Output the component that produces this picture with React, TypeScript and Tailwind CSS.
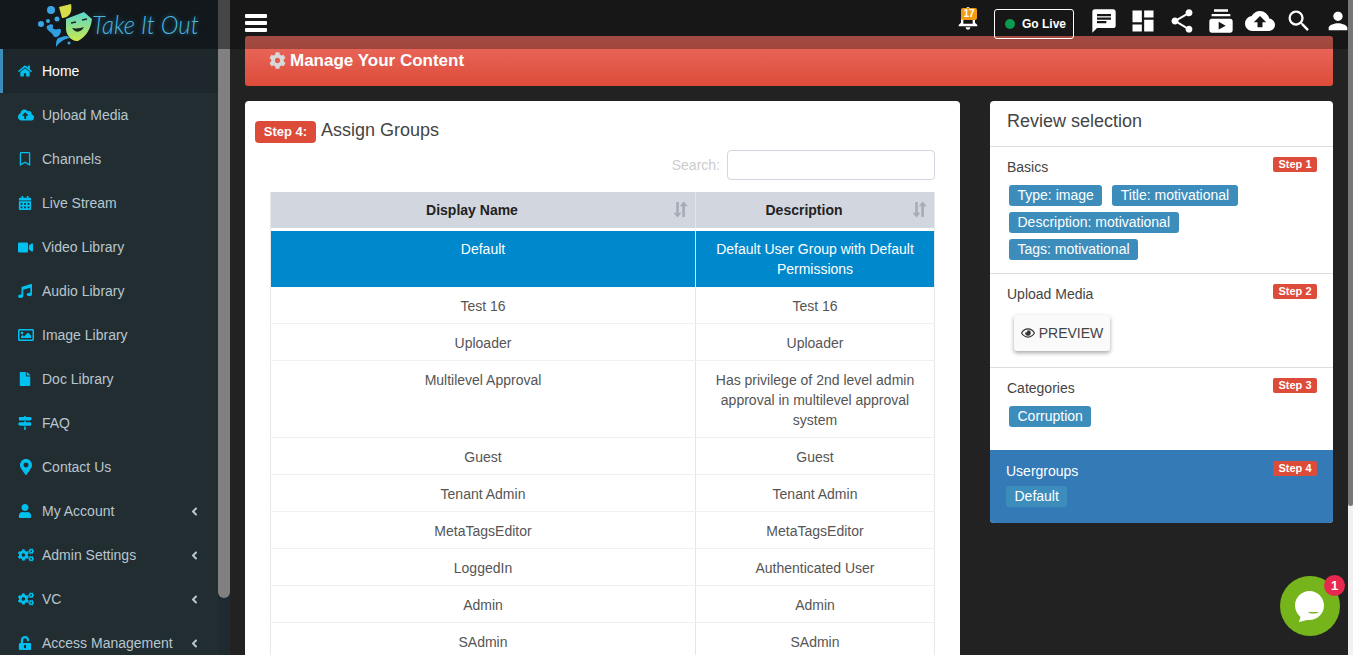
import type { ReactNode } from 'react'
import {
  FaAngleLeft,
  FaCalendarAlt,
  FaCloudUploadAlt,
  FaCog,
  FaCogs,
  FaFile,
  FaHome,
  FaMapMarkerAlt,
  FaMapSigns,
  FaMusic,
  FaRegBookmark,
  FaRegEye,
  FaRegImage,
  FaUnlockAlt,
  FaUser,
  FaVideo,
} from 'react-icons/fa'
import {
  MdChat,
  MdCloudUpload,
  MdDashboard,
  MdNotificationsNone,
  MdPerson,
  MdSearch,
  MdShare,
  MdSubscriptions,
} from 'react-icons/md'

const menu = [
  { label: 'Home', icon: <FaHome />, active: true },
  { label: 'Upload Media', icon: <FaCloudUploadAlt className="text-[16px]" /> },
  { label: 'Channels', icon: <FaRegBookmark /> },
  { label: 'Live Stream', icon: <FaCalendarAlt /> },
  { label: 'Video Library', icon: <FaVideo className="text-[15px]" /> },
  { label: 'Audio Library', icon: <FaMusic /> },
  { label: 'Image Library', icon: <FaRegImage className="text-[16px]" /> },
  { label: 'Doc Library', icon: <FaFile /> },
  { label: 'FAQ', icon: <FaMapSigns /> },
  { label: 'Contact Us', icon: <FaMapMarkerAlt className="text-[16px]" /> },
  { label: 'My Account', icon: <FaUser />, more: true },
  { label: 'Admin Settings', icon: <FaCogs className="text-[16px]" />, more: true },
  { label: 'VC', icon: <FaCogs className="text-[16px]" />, more: true },
  { label: 'Access Management', icon: <FaUnlockAlt />, more: true },
]

const groups = [
  ['Test 16', 'Test 16'],
  ['Uploader', 'Uploader'],
  ['Multilevel Approval', 'Has privilege of 2nd level admin approval in multilevel approval system'],
  ['Guest', 'Guest'],
  ['Tenant Admin', 'Tenant Admin'],
  ['MetaTagsEditor', 'MetaTagsEditor'],
  ['LoggedIn', 'Authenticated User'],
  ['Admin', 'Admin'],
  ['SAdmin', 'SAdmin'],
]

function Logo() {
  return (
    <div className="flex h-full items-center pl-[38px]">
      <svg width="56" height="49" viewBox="0 0 56 49" className="shrink-0">
        <path d="M20 38c5-1 8-4 12 0-7 1-11 5-14 9 0-4 0-7 2-9z" fill="#2f9fe0" />
        <path d="M9 26c4-3 7-2 6 1-1 2 3 3 5 2 3-1 4 2 2 5-2 4-6 4-7 1-1-3-8-5-6-9z" fill="#2f9fe0" />
        <circle cx="13" cy="10" r="4" fill="#3aa6e6" />
        <circle cx="3" cy="24" r="3" fill="#3aa6e6" />
        <circle cx="10" cy="21" r="2" fill="#3aa6e6" />
        <circle cx="19" cy="19" r="2.500" fill="#3aa6e6" />
        <circle cx="31" cy="43" r="1.500" fill="#3aa6e6" />
        <path d="M21 7l12-3c1 5 0 10-3 12-3 2-6 2-6 2z" fill="#d6dc4a" />
        <path d="M28 19l18-7 8 7c-1 9-5 17-14 22-7 1-12-7-12-12z" fill="url(#mask)" />
        <path d="M34 28c3 5 9 5 12-1-3 1-8 2-12 1z" fill="#1a2a20" />
        <path d="M33 23l5-1M44 20l5-1" stroke="#1a2a20" strokeWidth="1.600" />
        <defs>
          <linearGradient id="mask" x1="0" y1="0" x2="0" y2="1">
            <stop offset="0" stopColor="#59d6cf" />
            <stop offset="1" stopColor="#c9ea4c" />
          </linearGradient>
        </defs>
      </svg>
      <span className="ml-[-2px] origin-left scale-x-[0.92] font-['Lato',sans-serif] text-[26px] font-light italic whitespace-nowrap text-[#4fb3de] [text-shadow:0_0_6px_#1d6f95]">
        Take It Out
      </span>
    </div>
  )
}

function Sidebar() {
  return (
    <aside className="flex w-[230px] shrink-0 bg-[#222d32] text-[14px]">
      <div className="w-[218px] pt-[49px]">
        {menu.map((item) => (
          <div
            key={item.label}
            className={`flex h-[44px] items-center border-l-[3px] pr-[17px] pl-[15px] ${
              item.active ? 'border-[#3c8dbc] bg-[#1e282c] text-white' : 'border-transparent text-[#b8c7ce]'
            }`}
          >
            <span className="flex w-[24px] shrink-0 items-center text-[14px] text-[#00c0ef]">{item.icon}</span>
            <span className="whitespace-nowrap">{item.label}</span>
            {item.more && <FaAngleLeft className="ml-auto shrink-0 text-[13px]" />}
          </div>
        ))}
      </div>
      <div className="h-[655px] w-[12px] rounded-b-[6px] bg-[#1e2a30]">
        <div className="h-[598px] rounded-b-[6px] bg-[#808080]" />
      </div>
    </aside>
  )
}

function TopBar() {
  const icons = [
    <MdChat />,
    <MdDashboard />,
    <MdShare />,
    <MdSubscriptions />,
    <MdCloudUpload className="text-[30px]" />,
    <MdSearch />,
    <MdPerson />,
  ]
  return (
    <header className="absolute inset-x-0 top-0 z-10 flex h-[49px]">
      <div className="w-[230px] shrink-0 bg-black/45">
        <Logo />
      </div>
      <div className="flex flex-1 items-start bg-black/30 pl-[15px] text-white">
        <div className="mt-[14px] flex w-[22px] flex-col gap-[3px]">
          <span className="h-[4px] rounded-[1px] bg-white" />
          <span className="h-[4px] rounded-[1px] bg-white" />
          <span className="h-[4px] rounded-[1px] bg-white" />
        </div>
        <div className="relative mt-[4px] ml-auto text-[28px]">
          <MdNotificationsNone />
          <span className="absolute top-[4px] left-[7px] w-[16px] rounded-[2px] bg-[#f39c12] text-center text-[10px] leading-[12px] font-bold">
            17
          </span>
        </div>
        <div className="mt-[9px] ml-[12px] flex h-[30px] w-[80px] shrink-0 items-center rounded-[3px] border border-white pl-[10px] text-[12px] font-bold">
          <span className="mr-[7px] h-[10px] w-[10px] rounded-full bg-[#0a9b50]" />
          Go Live
        </div>
        <div className="mt-[7px] mr-[-4px] ml-[10px] flex w-[273px] shrink-0 items-center text-[28px]">
          {icons.map((icon, i) => (
            <span key={i} className="flex h-[28px] w-[39px] shrink-0 items-center justify-center">
              {icon}
            </span>
          ))}
        </div>
      </div>
    </header>
  )
}

function SortIcon() {
  return (
    <svg width="15" height="17" viewBox="0 0 14 16" className="absolute top-[9px] right-[7px]" fill="#a6abb4">
      <path d="M3 1h2.400v10H8l-3.800 4.500L.5 11H3z" />
      <path d="M8.700 15V5H6.300L10 .5 13.700 5h-2.600v10z" />
    </svg>
  )
}

function GroupTable() {
  const cell = 'border-b border-[#f0f0f0] px-[8px] pt-[9px] pb-[7px] align-top leading-[20px]'
  return (
    <table className="ml-[25px] w-[665px] table-fixed border-x border-[#e6e8ec] text-center text-[14px] text-[#555]">
      <colgroup>
        <col className="w-[425px]" />
        <col />
      </colgroup>
      <thead>
        <tr className="h-[36px] bg-[#d2d6de] text-[14px] font-bold text-[#222]">
          <th className="relative pr-[22px] font-bold">
            Display Name
            <SortIcon />
          </th>
          <th className="relative border-l border-[#e2e5ea] pr-[22px] font-bold">
            Description
            <SortIcon />
          </th>
        </tr>
      </thead>
      <tbody>
        <tr className="h-[3px]">
          <td colSpan={2} />
        </tr>
        <tr className="bg-[#0088cc] text-white">
          <td className="px-[8px] pt-[8px] pb-[8px] align-top leading-[20px]">Default</td>
          <td className="border-l border-[#e2e5ea] px-[18px] pt-[8px] pb-[8px] align-top leading-[20px]">
            Default User Group with Default Permissions
          </td>
        </tr>
        {groups.map(([name, description]) => (
          <tr key={name}>
            <td className={cell}>{name}</td>
            <td className={`${cell} border-l border-l-[#e2e5ea]`}>
              <div className="mx-auto w-[215px]">{description}</div>
            </td>
          </tr>
        ))}
      </tbody>
    </table>
  )
}

function Pill({ children }: { children: ReactNode }) {
  return (
    <span className="inline-block h-[21px] rounded-[3px] bg-[#3c8dbc] px-[8.5px] text-[14px] leading-[21px] whitespace-nowrap text-white">
      {children}
    </span>
  )
}

function StepTag({ n, top = 'top-[10px]' }: { n: number; top?: string }) {
  return (
    <span className={`absolute ${top} right-[16px] h-[15px] w-[44px] rounded-[2px] bg-[#dd4b39] text-center text-[11px] leading-[15px] font-bold whitespace-nowrap text-white`}>
      Step {n}
    </span>
  )
}

function ReviewCard() {
  return (
    <div className="w-[343px] shrink-0 self-start overflow-hidden rounded-[4px] bg-white text-[14px] text-[#444]">
      <div className="h-[46px] border-b border-[#ddd] pt-[8px] pl-[17px] text-[18px] leading-[24px]">Review selection</div>
      <div className="relative h-[127px] border-b border-[#ddd] pt-[10px] pl-[17px]">
        <StepTag n={1} />
        <div className="leading-[20px]">Basics</div>
        <div className="mt-[8px] ml-[2px] flex w-[260px] flex-wrap gap-x-[10px] gap-y-[6px]">
          <Pill>Type: image</Pill>
          <Pill>Title: motivational</Pill>
          <Pill>Description: motivational</Pill>
          <Pill>Tags: motivational</Pill>
        </div>
      </div>
      <div className="relative h-[94px] border-b border-[#ddd] pt-[10px] pl-[17px]">
        <StepTag n={2} />
        <div className="leading-[20px]">Upload Media</div>
        <div className="mt-[11px] ml-[7px] flex h-[36px] w-[96px] items-center justify-center gap-[4px] rounded-[3px] bg-[#fafafa] shadow-[0_2px_4px_rgba(0,0,0,.35)]">
          <FaRegEye className="text-[14px] text-[#333]" />
          PREVIEW
        </div>
      </div>
      <div className="relative h-[82px] pt-[10px] pl-[17px]">
        <StepTag n={3} />
        <div className="leading-[20px]">Categories</div>
        <div className="mt-[8px] ml-[2px]">
          <Pill>Corruption</Pill>
        </div>
      </div>
      <div className="relative h-[73px] bg-[#337ab7] pt-[11px] pl-[16px] text-white">
        <StepTag n={4} top="top-[11px]" />
        <div className="leading-[20px]">Usergroups</div>
        <div className="mt-[5px]">
          <Pill>Default</Pill>
        </div>
      </div>
    </div>
  )
}

function ChatBubble() {
  return (
    <div className="absolute top-[576px] left-[1280px] z-20 flex h-[60px] w-[60px] items-center justify-center rounded-full bg-[#76b41c]">
      <svg width="32" height="34" viewBox="0 0 32 34">
        <path d="M15.500 2c8 0 14.500 6.500 14.500 14.500S23.500 31 15.500 31c-1.500 0-3 0-4.500.5L5 33l1.500-5C3 25 1 21 1 16.500 1 8.500 7.500 2 15.500 2z" fill="#fff" />
        <path d="M14 23c2 2 8 2 11 0z" fill="#76b41c" />
      </svg>
      <span className="absolute -top-[1px] -right-[5px] flex h-[21px] w-[21px] items-center justify-center rounded-full bg-[#e8294f] text-[13px] font-bold text-white">
        1
      </span>
    </div>
  )
}

export default function App() {
  return (
    <div className="relative flex h-[655px] w-[1353px] overflow-hidden bg-[#222] font-['Liberation_Sans',Arial,sans-serif]">
      <TopBar />
      <Sidebar />
      <main className="min-w-0 flex-1 pt-[36px] pl-[15px]">
        <div className="flex h-[50px] w-[1088px] items-center rounded-[3px] bg-gradient-to-b from-[#ea6c60] to-[#dd4b39] pb-[1px] pl-[24px] text-[17px] font-bold text-white">
          <FaCog className="mr-[4px] text-[17px] text-[#d8d8d8]" />
          Manage Your Content
        </div>
        <div className="mt-[15px] flex gap-[30px]">
          <div className="h-[600px] w-[715px] shrink-0 rounded-[4px] bg-white">
            <div className="flex h-[42px] items-start pt-[20px] pl-[10px]">
              <span className="flex h-[22px] w-[61px] items-center justify-center rounded-[4px] bg-[#dd4b39] text-[13px] font-bold text-white">
                Step 4:
              </span>
              <span className="ml-[5px] text-[18px] leading-[18px] text-[#444]">Assign Groups</span>
            </div>
            <div className="mt-[7px] flex items-center justify-end pr-[25px] text-[14px] text-[#ccc]">
              Search:
              <input className="ml-[7px] h-[30px] w-[208px] rounded-[4px] border border-[#d2d6de] bg-white" />
            </div>
            <div className="mt-[12px]">
              <GroupTable />
            </div>
          </div>
          <ReviewCard />
        </div>
      </main>
      <div className="absolute top-0 right-0 z-20 h-full w-[5px] bg-[#f1f1f1]">
        <div className="h-[506px] rounded-b-[3px] bg-[#777]" />
      </div>
      <ChatBubble />
    </div>
  )
}
